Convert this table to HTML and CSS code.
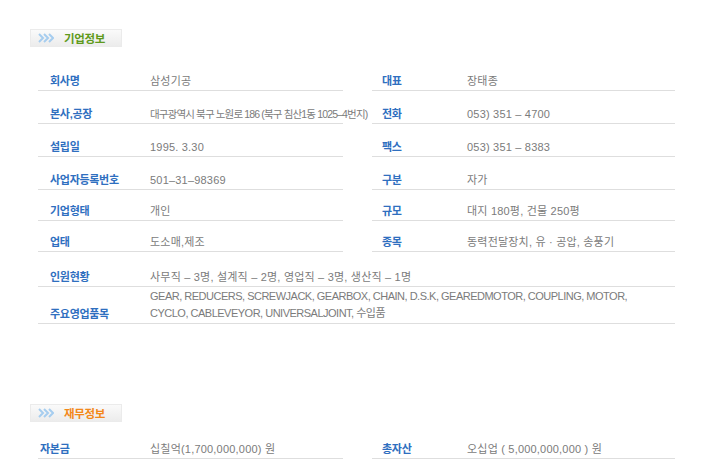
FILE: index.html
```html
<!DOCTYPE html>
<html lang="ko">
<head>
    <meta charset="UTF-8">
    <meta name="viewport" content="width=device-width, initial-scale=1.0">
    <title>회사소개</title>
    <link rel="stylesheet" href="styles.css">
</head>
<body>
    <div class="section company">
        <div class="badge">
            <svg class="arrows" width="16" height="10" viewBox="0 0 16 10">
                <polyline points="1,1 5,5 1,9" />
                <polyline points="6,1 10,5 6,9" />
                <polyline points="11,1 15,5 11,9" />
            </svg>
            <span class="badge-text green">기업정보</span>
        </div>
        <div class="info">
            <div class="cell"><span class="label">회사명</span><span class="val">삼성기공</span></div>
            <div class="cell right"><span class="label">대표</span><span class="val">장태종</span></div>

            <div class="cell"><span class="label">본사,공장</span><span class="val narrow">대구광역시 북구 노원로 186 (북구 침산1동 1025&ndash;4번지)</span></div>
            <div class="cell right"><span class="label">전화</span><span class="val">053) 351 &ndash; 4700</span></div>

            <div class="cell"><span class="label">설립일</span><span class="val">1995. 3.30</span></div>
            <div class="cell right"><span class="label">팩스</span><span class="val">053) 351 &ndash; 8383</span></div>

            <div class="cell"><span class="label">사업자등록번호</span><span class="val">501&ndash;31&ndash;98369</span></div>
            <div class="cell right"><span class="label">구분</span><span class="val">자가</span></div>

            <div class="cell"><span class="label">기업형태</span><span class="val">개인</span></div>
            <div class="cell right"><span class="label">규모</span><span class="val">대지 180평, 건물 250평</span></div>

            <div class="cell"><span class="label">업태</span><span class="val">도소매,제조</span></div>
            <div class="cell right"><span class="label">종목</span><span class="val">동력전달장치, 유 · 공압, 송풍기</span></div>

            <div class="cell wide"><span class="label">인원현황</span><span class="val">사무직 &ndash; 3명, 설계직 &ndash; 2명, 영업직 &ndash; 3명, 생산직 &ndash; 1명</span></div>

            <div class="cell wide"><span class="label">주요영업품목</span><span class="val multi">GEAR, REDUCERS, SCREWJACK, GEARBOX, CHAIN, D.S.K, GEAREDMOTOR, COUPLING, MOTOR,<br>CYCLO, CABLEVEYOR, UNIVERSALJOINT, 수입품</span></div>
        </div>
    </div>

    <div class="section finance">
        <div class="badge">
            <svg class="arrows" width="16" height="10" viewBox="0 0 16 10">
                <polyline points="1,1 5,5 1,9" />
                <polyline points="6,1 10,5 6,9" />
                <polyline points="11,1 15,5 11,9" />
            </svg>
            <span class="badge-text orange">재무정보</span>
        </div>
        <div class="info money">
            <div class="cell first"><span class="label">자본금</span><span class="val">십칠억(1,700,000,000) 원</span></div>
            <div class="cell right"><span class="label">총자산</span><span class="val">오십업 ( 5,000,000,000 ) 원</span></div>
        </div>
    </div>
</body>
</html>
```

FILE: styles.css
```css
body {
    margin: 0;
    background: #fff;
    font-family: "Liberation Sans", "Noto Sans CJK KR", sans-serif;
    font-size: 11px;
}

.section {
    padding-left: 30px;
}

.company {
    padding-top: 29px;
}

.finance {
    padding-top: 80px;
}

.badge {
    width: 90px;
    height: 16px;
    display: flex;
    align-items: center;
    border: 1px solid #ebebeb;
    background: linear-gradient(#fafafa, #ececec);
}

.arrows {
    margin-left: 7px;
    margin-right: 10px;
}

.arrows polyline {
    fill: none;
    stroke: #a6cdef;
    stroke-width: 2;
}

.badge-text {
    font-weight: bold;
    font-size: 11.5px;
    letter-spacing: -0.3px;
}

.green {
    color: #5f9a1c;
}

.orange {
    color: #f3881a;
}

.info {
    display: grid;
    grid-template-columns: 305px 303px;
    grid-template-rows: 33px 33px 33px 33px 31px 31px 35px 37px;
    column-gap: 29px;
    margin: 11px 0 0 8px;
    width: 637px;
}

.money {
    grid-template-rows: 33px;
    margin-top: 4px;
}

.cell {
    display: flex;
    align-items: flex-end;
    border-bottom: 1px solid #dedede;
    padding-bottom: 2px;
    line-height: 14px;
    white-space: nowrap;
}

.cell.wide {
    grid-column: 1 / -1;
}

.label {
    width: 100px;
    padding-left: 12px;
    flex-shrink: 0;
    font-weight: bold;
    color: #2f6fbf;
    letter-spacing: -0.3px;
}

.right .label {
    width: 85px;
    padding-left: 10px;
}

.first .label {
    padding-left: 2px;
    width: 110px;
}

.val {
    color: #7b7b7b;
    letter-spacing: 0.2px;
}

.val.narrow {
    letter-spacing: -0.85px;
    font-size: 10.5px;
}

.val.multi {
    line-height: 17px;
    margin-bottom: -1px;
    letter-spacing: -0.5px;
}
```
